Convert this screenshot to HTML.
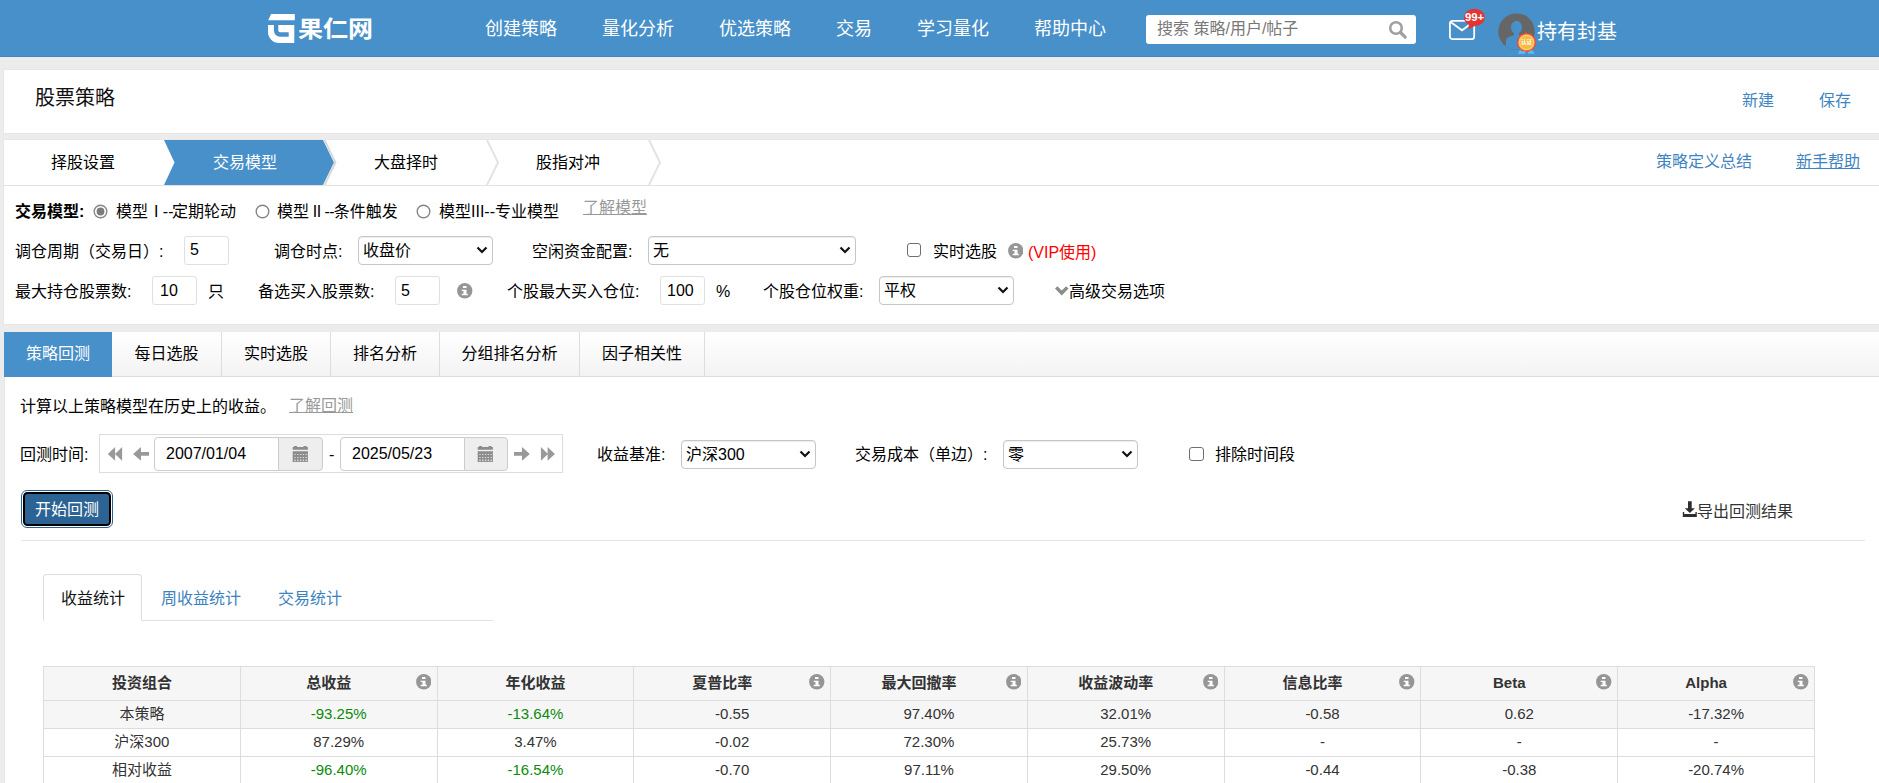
<!DOCTYPE html>
<html lang="zh-CN">
<head>
<meta charset="utf-8">
<title>果仁网 - 股票策略</title>
<style>
*{box-sizing:border-box;margin:0;padding:0}
html,body{width:1879px;height:783px;overflow:hidden}
body{background:#ececec;font-family:"Liberation Sans","Noto Sans CJK SC",sans-serif;font-size:16px;color:#000;position:relative}
.abs{position:absolute;white-space:nowrap}
.t{position:absolute;white-space:nowrap;line-height:20px;height:20px}
#hdr{left:0;top:0;width:1879px;height:57px;background:#4890c9;border-bottom:1px solid #3f87c2}
.nav{color:#fff;font-size:18px;line-height:24px;height:24px;top:17px}
.blue{color:#3f84c2}
.panel{background:#fff}
.inp{position:absolute;border:1px solid #e0e0e0;border-radius:3px;background:#fff;height:29px;line-height:27px;font-size:16px;padding-left:9px}
.sel{position:absolute;border:1px solid #c6c6c6;box-shadow:inset 0 1px 1px rgba(0,0,0,.075);border-radius:4px;background:#fff;height:29px;line-height:27px;font-size:16px;padding-left:4px}
.sel svg{position:absolute;right:4.100px;top:8.600px}
.cb{position:absolute;width:14.300px;height:14.300px;border:1.300px solid #6f6f6f;border-radius:3px;background:#fff}
.radio{position:absolute;width:14.600px;height:14.600px;border:1.400px solid #858585;border-radius:50%;background:#fff}
.tab{position:absolute;top:332px;height:45px;line-height:44px;text-align:center;font-size:16px;border-right:1px solid #ddd}
.gray{color:#999;text-decoration:underline}
.info{position:absolute;width:15.500px;height:15.500px}
table{border-collapse:collapse;position:absolute;left:43px;top:666px;width:1772px;table-layout:fixed;font-size:15px}
td,th{border:1px solid #ddd;text-align:center;height:28px;line-height:20px;padding:0;position:relative}
th{height:34px;background:#f6f6f6;font-weight:bold;color:#333}
td{color:#333}
tr.s td{background:#f6f6f6}
.g{color:#0b8b0b}
th .info{right:5.500px;top:7px;width:15.500px;height:15.500px}
th.i{padding-right:20px}
th{padding-bottom:2px}
td{padding-bottom:2px}
</style>
</head>
<body>
<!-- header -->
<div id="hdr" class="abs"></div>
<div class="abs" id="logo" style="left:268px;top:14px;color:#fff;font-weight:bold;font-size:25px;line-height:30px">
<svg class="abs" style="left:0;top:0" width="28" height="30" viewBox="0 0 28 30"><path d="M3.1 0.100H26.800V6.200H0.200ZM0 10.900H26.300V29H11A11 11 0 0 1 0 18Z" fill="#fff"/><path d="M8.100 10V16.500A4 4 0 0 0 12.100 20.500H20.700" fill="none" stroke="#4890c9" stroke-width="4.400"/></svg>
<span class="abs" style="left:30px;top:-1px;transform:scaleY(.92);transform-origin:0 27px">果仁网</span>
</div>
<div class="abs nav" style="left:485px">创建策略</div>
<div class="abs nav" style="left:602px">量化分析</div>
<div class="abs nav" style="left:719px">优选策略</div>
<div class="abs nav" style="left:836px">交易</div>
<div class="abs nav" style="left:917px">学习量化</div>
<div class="abs nav" style="left:1034px">帮助中心</div>
<div class="abs" style="left:1146px;top:15px;width:270px;height:29px;background:#fff;border-radius:3px;color:#787878;font-size:16px;line-height:28px;padding-left:11px">搜索 策略/用户/帖子
<svg class="abs" style="left:242px;top:5px" width="20" height="20" viewBox="0 0 20 20"><circle cx="8" cy="8" r="5.800" fill="none" stroke="#a0a0a0" stroke-width="2.600"/><path d="M12.500 12.500L17.200 17.200" stroke="#a0a0a0" stroke-width="3.200" stroke-linecap="round"/></svg>
</div>
<svg class="abs" style="left:1448px;top:8px" width="40" height="36" viewBox="0 0 40 36"><rect x="1.900" y="12.900" width="24.300" height="18.300" rx="2.800" fill="none" stroke="#fff" stroke-width="1.800"/><path d="M3 14.200L14 22.300L25 14.200" fill="none" stroke="#fff" stroke-width="1.800"/><ellipse cx="26.400" cy="9.400" rx="10.500" ry="8.600" fill="#e23434"/><path d="M21 15L28 17.500L20.400 21.200Z" fill="#e23434"/><text x="26.600" y="12.900" font-family="Liberation Sans, sans-serif" font-weight="bold" font-size="11.300" fill="#fff" text-anchor="middle">99+</text></svg>
<svg class="abs" style="left:1497px;top:12px" width="44" height="44" viewBox="0 0 44 44"><defs><clipPath id="avc"><circle cx="19.500" cy="19.600" r="18.200"/></clipPath></defs><circle cx="19.500" cy="19.600" r="18.200" fill="#666"/><g clip-path="url(#avc)" fill="#4890c9"><ellipse cx="19.500" cy="15.300" rx="5.500" ry="6.500"/><path d="M17 19H22V23.200Q30 24.500 30.300 30V40H8.800V30Q9 24.500 17 23.200Z"/></g><path d="M23.200 37.600H28.100V41.800H21.100ZM30.200 38.500L35.100 37.600L37.600 41.800H31.300Z" fill="#4fc3f7"/><circle cx="29.500" cy="30.400" r="9.100" fill="#f04a3c" stroke="#f04a3c" stroke-width="1.400" stroke-dasharray="3.300 2.420"/><circle cx="29.500" cy="30.400" r="8.200" fill="#f9b93e"/><circle cx="29.500" cy="30.400" r="7" fill="none" stroke="#fff" stroke-width="0.500" opacity=".7"/><text x="29.500" y="32.400" font-size="5.500" font-weight="bold" fill="#fff" text-anchor="middle" font-family="Liberation Sans, Noto Sans CJK SC, sans-serif">认证</text></svg>
<div class="abs" style="left:1537px;top:19px;color:#fff;font-size:20px;line-height:26px">持有封基</div>

<!-- title panel -->
<div class="abs panel" style="left:3px;top:69px;width:1876px;height:65px;border:1px solid #e7e7e7;border-right:0"></div>
<div class="abs" style="left:35px;top:85px;font-size:20px;line-height:26px;color:#111">股票策略</div>
<div class="abs blue" style="left:1742px;top:90px;font-size:16px;line-height:22px">新建</div>
<div class="abs blue" style="left:1819px;top:90px;font-size:16px;line-height:22px">保存</div>

<!-- wizard panel -->
<div class="abs panel" style="left:3px;top:139px;width:1876px;height:186px;border:1px solid #e7e7e7;border-right:0"></div>
<div class="abs" style="left:4px;top:185px;width:1875px;height:1px;background:#e3e3e3"></div>
<svg class="abs" style="left:4px;top:140px" width="670" height="45" viewBox="0 0 670 45"><path d="M160 0H319L330 22.5L319 45H160L170.500 22.5Z" fill="#4890c9"/><path d="M320.500 0L331.500 22.5L320.500 45" fill="none" stroke="#d9d9d9" stroke-width="2"/><path d="M483 0L494 22.500L483 45M645 0L656 22.500L645 45" fill="none" stroke="#e3e3e3" stroke-width="2"/></svg>
<div class="abs" style="left:51px;top:152px;line-height:22px">择股设置</div>
<div class="abs" style="left:213px;top:152px;line-height:22px;color:#fff">交易模型</div>
<div class="abs" style="left:374px;top:152px;line-height:22px">大盘择时</div>
<div class="abs" style="left:536px;top:152px;line-height:22px">股指对冲</div>
<div class="abs blue" style="left:1656px;top:151px;line-height:22px">策略定义总结</div>
<div class="abs blue" style="left:1796px;top:151px;line-height:22px;text-decoration:underline">新手帮助</div>

<!-- model rows -->
<div class="abs" style="left:15px;top:201px;line-height:22px;font-weight:bold">交易模型:</div>
<svg class="abs" style="left:92.700px;top:203.600px" width="15" height="15" viewBox="0 0 15 15"><circle cx="7.500" cy="7.500" r="6.300" fill="#fff" stroke="#858585" stroke-width="1.400"/><circle cx="7.500" cy="7.500" r="3.900" fill="#7c7c7c"/></svg>
<div class="abs" style="left:116px;top:201px;line-height:22px">模型 <span style="margin-left:1.500px;margin-right:-1.500px">I --</span>定期轮动</div>
<svg class="abs" style="left:255px;top:203.6px" width="15" height="15" viewBox="0 0 15 15"><circle cx="7.500" cy="7.500" r="6.300" fill="#fff" stroke="#858585" stroke-width="1.400"/></svg>
<div class="abs" style="left:277px;top:201px;line-height:22px">模型<span style="letter-spacing:-0.600px"> II --</span>条件触发</div>
<svg class="abs" style="left:416px;top:203.6px" width="15" height="15" viewBox="0 0 15 15"><circle cx="7.500" cy="7.500" r="6.300" fill="#fff" stroke="#858585" stroke-width="1.400"/></svg>
<div class="abs" style="left:439px;top:201px;line-height:22px">模型III--专业模型</div>
<div class="abs gray" style="left:583px;top:197px;line-height:22px">了解模型</div>

<div class="abs" style="left:15px;top:241px;line-height:22px">调仓周期（交易日）:</div>
<div class="inp" style="left:184px;top:236px;width:45px;padding-left:5px;line-height:25px">5</div>
<div class="abs" style="left:274px;top:241px;line-height:22px">调仓时点:</div>
<div class="sel" style="left:358px;top:236px;width:135px">收盘价<svg width="12" height="8" viewBox="0 0 12 8"><path d="M1.500 1.500L6 6L10.500 1.500" fill="none" stroke="#111" stroke-width="2.2"/></svg></div>
<div class="abs" style="left:532px;top:241px;line-height:22px">空闲资金配置:</div>
<div class="sel" style="left:648px;top:236px;width:208px">无<svg width="12" height="8" viewBox="0 0 12 8"><path d="M1.500 1.500L6 6L10.500 1.500" fill="none" stroke="#111" stroke-width="2.2"/></svg></div>
<div class="cb" style="left:907.200px;top:243px"></div>
<div class="abs" style="left:933px;top:241px;line-height:22px">实时选股</div>
<svg class="info" style="left:1007.5px;top:243px;width:15.5px;height:15.5px" viewBox="0 0 15.500 15.500"><circle cx="7.750" cy="7.750" r="7.650" fill="#969696"/><path d="M6 3H9.500V5H6ZM4.700 6.800H9.500V10.800H10.800V12.200H4.700V10.800H6.500V8.100H4.700Z" fill="#fff"/></svg>
<div class="abs" style="left:1028px;top:242px;line-height:22px;color:#f00">(VIP使用)</div>

<div class="abs" style="left:15px;top:281px;line-height:22px">最大持仓股票数:</div>
<div class="inp" style="left:152px;top:276px;width:45px;padding-left:7px">10</div>
<div class="abs" style="left:208px;top:281px;line-height:22px">只</div>
<div class="abs" style="left:258px;top:281px;line-height:22px">备选买入股票数:</div>
<div class="inp" style="left:395px;top:276px;width:45px;padding-left:5px">5</div>
<svg class="info" style="left:457.200px;top:283.200px" viewBox="0 0 15.500 15.500"><circle cx="7.750" cy="7.750" r="7.650" fill="#969696"/><path d="M6 3H9.500V5H6ZM4.700 6.800H9.500V10.800H10.800V12.200H4.700V10.800H6.500V8.100H4.700Z" fill="#fff"/></svg>
<div class="abs" style="left:507px;top:281px;line-height:22px">个股最大买入仓位:</div>
<div class="inp" style="left:660px;top:276px;width:45px;padding-left:6px">100</div>
<div class="abs" style="left:716px;top:281px;line-height:22px">%</div>
<div class="abs" style="left:763px;top:281px;line-height:22px">个股仓位权重:</div>
<div class="sel" style="left:879px;top:276px;width:135px">平权<svg width="12" height="8" viewBox="0 0 12 8"><path d="M1.500 1.500L6 6L10.500 1.500" fill="none" stroke="#111" stroke-width="2.2"/></svg></div>
<svg class="abs" style="left:1054.500px;top:286px" width="14" height="10" viewBox="0 0 14 10"><path d="M0 2.600L2.400 0.200L6.750 4.600L11.100 0.200L13.500 2.600L6.750 9.400Z" fill="#8c8c8c"/></svg>
<div class="abs" style="left:1069px;top:281px;line-height:22px">高级交易选项</div>

<!-- main tabs -->
<div class="abs" style="left:4px;top:332px;width:1875px;height:451px;background:#fff;border-left:1px solid #e7e7e7"></div>
<div class="abs" style="left:4px;top:332px;width:1875px;height:45px;background:linear-gradient(#fff,#f3f3f3);border-bottom:1px solid #ddd"></div>
<div class="tab" style="left:4px;width:108px;background:#4890c9;color:#fff;border-right:0">策略回测</div>
<div class="tab" style="left:112px;width:110px">每日选股</div>
<div class="tab" style="left:222px;width:109px">实时选股</div>
<div class="tab" style="left:331px;width:109px">排名分析</div>
<div class="tab" style="left:440px;width:140px">分组排名分析</div>
<div class="tab" style="left:580px;width:125px">因子相关性</div>

<div class="abs" style="left:20px;top:396px;line-height:22px">计算以上策略模型在历史上的收益。</div>
<div class="abs gray" style="left:289px;top:395px;line-height:22px">了解回测</div>

<!-- date row -->
<div class="abs" style="left:20px;top:444px;line-height:22px">回测时间:</div>
<div class="abs" style="left:99px;top:434px;width:464px;height:39px;border:1px solid #ddd"></div>
<svg class="abs" style="left:107px;top:446px" width="44" height="16" viewBox="0 0 44 16"><path d="M8.100 1V14.800L0.800 7.900ZM15.100 1V14.800L8 7.900Z" fill="#999"/><path d="M34 1L26.100 7.900L34 14.800V9.800H42V6.100H34Z" fill="#999"/></svg>
<div class="inp" style="left:154px;top:437px;width:125px;height:34px;line-height:32px;border-radius:4px 0 0 4px;padding-left:11px;border-color:#ccc">2007/01/04</div>
<div class="abs" style="left:278px;top:437px;width:45px;height:34px;background:#eee;border:1px solid #ccc;border-radius:0 4px 4px 0"></div>
<svg class="abs" style="left:292px;top:445px" width="17" height="18" viewBox="0 0 17 18"><path d="M2 0.900H5V2H2ZM11.500 0.900H14.500V2H11.500ZM0.700 2H15.900V4.800H0.700ZM0.700 6.200H15.900V17H0.700Z" fill="#8c8c8c"/><path d="M2.300 9h1.400v1h-1.400zM5.100 9h1.400v1h-1.400zM7.900 9h1.400v1h-1.400zM10.700 9h1.400v1h-1.400zM13.500 9h1.400v1h-1.400zM2.300 12h1.400v1h-1.400zM5.100 12h1.400v1h-1.400zM7.900 12h1.400v1h-1.400zM10.700 12h1.400v1h-1.400zM13.500 12h1.400v1h-1.400zM2.300 14.500h1.400v1.700h-1.400zM5.100 14.500h1.400v1.700h-1.400zM7.900 14.500h1.400v1.700h-1.400zM10.700 14.500h1.400v1.700h-1.400zM13.500 14.500h1.400v1.700h-1.400z" fill="#dcdcdc"/></svg>
<div class="abs" style="left:329px;top:444px;line-height:22px">-</div>
<div class="inp" style="left:340px;top:437px;width:125px;height:34px;line-height:32px;border-radius:4px 0 0 4px;padding-left:11px;border-color:#ccc">2025/05/23</div>
<div class="abs" style="left:464px;top:437px;width:44px;height:34px;background:#eee;border:1px solid #ccc;border-radius:0 4px 4px 0"></div>
<svg class="abs" style="left:477px;top:445px" width="17" height="18" viewBox="0 0 17 18"><path d="M2 0.900H5V2H2ZM11.500 0.900H14.500V2H11.500ZM0.700 2H15.900V4.800H0.700ZM0.700 6.200H15.900V17H0.700Z" fill="#8c8c8c"/><path d="M2.300 9h1.400v1h-1.400zM5.100 9h1.400v1h-1.400zM7.900 9h1.400v1h-1.400zM10.700 9h1.400v1h-1.400zM13.500 9h1.400v1h-1.400zM2.300 12h1.400v1h-1.400zM5.100 12h1.400v1h-1.400zM7.900 12h1.400v1h-1.400zM10.700 12h1.400v1h-1.400zM13.500 12h1.400v1h-1.400zM2.300 14.500h1.400v1.700h-1.400zM5.100 14.500h1.400v1.700h-1.400zM7.900 14.500h1.400v1.700h-1.400zM10.700 14.500h1.400v1.700h-1.400zM13.500 14.500h1.400v1.700h-1.400z" fill="#dcdcdc"/></svg>
<svg class="abs" style="left:513px;top:446px" width="44" height="16" viewBox="0 0 44 16"><path d="M9 1L16.800 7.900L9 14.800V9.800H1V6.100H9Z" fill="#999"/><path d="M27.900 1V14.800L35 7.900ZM34.600 1V14.800L41.900 7.900Z" fill="#999"/></svg>
<div class="abs" style="left:597px;top:444px;line-height:22px">收益基准:</div>
<div class="sel" style="left:681px;top:440px;width:135px">沪深300<svg width="12" height="8" viewBox="0 0 12 8"><path d="M1.500 1.500L6 6L10.500 1.500" fill="none" stroke="#111" stroke-width="2.2"/></svg></div>
<div class="abs" style="left:855px;top:444px;line-height:22px">交易成本（单边）:</div>
<div class="sel" style="left:1003px;top:440px;width:135px">零<svg width="12" height="8" viewBox="0 0 12 8"><path d="M1.500 1.500L6 6L10.500 1.500" fill="none" stroke="#111" stroke-width="2.2"/></svg></div>
<div class="cb" style="left:1189.300px;top:447.200px"></div>
<div class="abs" style="left:1215px;top:444px;line-height:22px">排除时间段</div>

<!-- button -->
<div class="abs" style="left:21px;top:490px;width:92px;height:38px;border:1px solid #2d6190;border-radius:6px;background:#fff;padding:1px"><div style="width:100%;height:100%;border:2px solid #000;background:#2b6394;border-radius:4.500px;color:#fff;text-align:center;line-height:32px;font-size:16px">开始回测</div></div>
<svg class="abs" style="left:1682px;top:501px" width="16" height="17" viewBox="0 0 16 17"><path d="M6 0.200H9.700V7.300H12.900L7.850 12L2.800 7.300H6ZM0.800 11H2.200V12.900H13.400V11H14.800V15.900H0.800Z" fill="#2e2e2e"/></svg>
<div class="abs" style="left:1697px;top:501px;line-height:22px;font-size:16px;color:#333">导出回测结果</div>
<div class="abs" style="left:21px;top:540px;width:1844px;height:1px;background:#e5e5e5"></div>

<!-- sub tabs -->
<div class="abs" style="left:43px;top:620px;width:450px;height:1px;background:#e0e0e0"></div>
<div class="abs" style="left:43px;top:574px;width:99px;height:47px;border:1px solid #ddd;border-bottom-color:#fff;border-radius:4px 4px 0 0;background:#fff"></div>
<div class="abs" style="left:61px;top:588px;line-height:22px;color:#111">收益统计</div>
<div class="abs" style="left:161px;top:588px;line-height:22px;color:#3b82c0">周收益统计</div>
<div class="abs" style="left:278px;top:588px;line-height:22px;color:#3b82c0">交易统计</div>

<!-- table -->
<table>
<tr><th>投资组合</th><th class="i">总收益<svg class="info" viewBox="0 0 15.500 15.500"><circle cx="7.750" cy="7.750" r="7.650" fill="#969696"/><path d="M6 3H9.500V5H6ZM4.700 6.800H9.500V10.800H10.800V12.200H4.700V10.800H6.500V8.100H4.700Z" fill="#fff"/></svg></th><th>年化收益</th><th class="i">夏普比率<svg class="info" viewBox="0 0 15.500 15.500"><circle cx="7.750" cy="7.750" r="7.650" fill="#969696"/><path d="M6 3H9.500V5H6ZM4.700 6.800H9.500V10.800H10.800V12.200H4.700V10.800H6.500V8.100H4.700Z" fill="#fff"/></svg></th><th class="i">最大回撤率<svg class="info" viewBox="0 0 15.500 15.500"><circle cx="7.750" cy="7.750" r="7.650" fill="#969696"/><path d="M6 3H9.500V5H6ZM4.700 6.800H9.500V10.800H10.800V12.200H4.700V10.800H6.500V8.100H4.700Z" fill="#fff"/></svg></th><th class="i">收益波动率<svg class="info" viewBox="0 0 15.500 15.500"><circle cx="7.750" cy="7.750" r="7.650" fill="#969696"/><path d="M6 3H9.500V5H6ZM4.700 6.800H9.500V10.800H10.800V12.200H4.700V10.800H6.500V8.100H4.700Z" fill="#fff"/></svg></th><th class="i">信息比率<svg class="info" viewBox="0 0 15.500 15.500"><circle cx="7.750" cy="7.750" r="7.650" fill="#969696"/><path d="M6 3H9.500V5H6ZM4.700 6.800H9.500V10.800H10.800V12.200H4.700V10.800H6.500V8.100H4.700Z" fill="#fff"/></svg></th><th class="i">Beta<svg class="info" viewBox="0 0 15.500 15.500"><circle cx="7.750" cy="7.750" r="7.650" fill="#969696"/><path d="M6 3H9.500V5H6ZM4.700 6.800H9.500V10.800H10.800V12.200H4.700V10.800H6.500V8.100H4.700Z" fill="#fff"/></svg></th><th class="i">Alpha<svg class="info" viewBox="0 0 15.500 15.500"><circle cx="7.750" cy="7.750" r="7.650" fill="#969696"/><path d="M6 3H9.500V5H6ZM4.700 6.800H9.500V10.800H10.800V12.200H4.700V10.800H6.500V8.100H4.700Z" fill="#fff"/></svg></th></tr>
<tr class="s"><td>本策略</td><td class="g">-93.25%</td><td class="g">-13.64%</td><td>-0.55</td><td>97.40%</td><td>32.01%</td><td>-0.58</td><td>0.62</td><td>-17.32%</td></tr>
<tr><td>沪深300</td><td>87.29%</td><td>3.47%</td><td>-0.02</td><td>72.30%</td><td>25.73%</td><td>-</td><td>-</td><td>-</td></tr>
<tr><td>相对收益</td><td class="g">-96.40%</td><td class="g">-16.54%</td><td>-0.70</td><td>97.11%</td><td>29.50%</td><td>-0.44</td><td>-0.38</td><td>-20.74%</td></tr>
</table>
</body>
</html>
